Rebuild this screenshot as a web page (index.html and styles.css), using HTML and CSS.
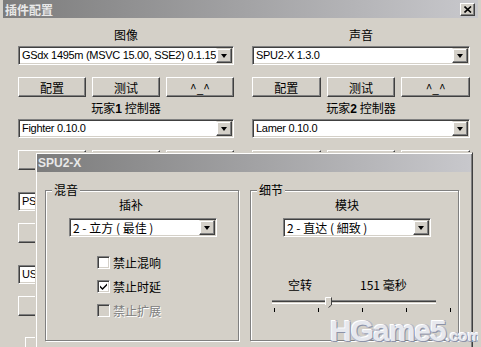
FILE: index.html
```html
<!DOCTYPE html>
<html lang="zh-CN">
<head>
    <meta charset="UTF-8">
    <meta name="viewport" content="width=device-width, initial-scale=1.0">
    <title>插件配置</title>
    <link rel="stylesheet" href="styles.css">
</head>
<body>
    <div class="window">
        <div class="titlebar">
            <span class="title">插件配置</span>
            <button class="close-btn" aria-label="关闭">
                <svg width="8" height="7" viewBox="0 0 8 7"><path d="M0.5 0.5 L7 6.5 M7 0.5 L0.5 6.5" stroke="#000" stroke-width="1.6" fill="none"/></svg>
            </button>
        </div>

        <!-- Plugin columns (behind the SPU2-X dialog) -->
        <div class="columns">
            <div class="column">
                <div class="section-label">图像</div>
                <div class="combo"><span class="combo-text">GSdx 1495m (MSVC 15.00, SSE2) 0.1.15</span><span class="combo-arrow"></span></div>
                <div class="btn-row"><button class="btn">配置</button><button class="btn">测试</button><button class="btn">^_^</button></div>

                <div class="section-label">玩家<b>1</b> 控制器</div>
                <div class="combo"><span class="combo-text">Fighter 0.10.0</span><span class="combo-arrow"></span></div>
                <div class="btn-row"><button class="btn"></button><button class="btn"></button><button class="btn"></button></div>

                <div class="section-label"></div>
                <div class="combo"><span class="combo-text">PS2</span><span class="combo-arrow"></span></div>
                <div class="btn-row"><button class="btn"></button><button class="btn"></button><button class="btn"></button></div>

                <div class="section-label"></div>
                <div class="combo"><span class="combo-text">USB</span><span class="combo-arrow"></span></div>
                <div class="btn-row"><button class="btn"></button><button class="btn"></button><button class="btn"></button></div>

                <div class="extra-row"><span class="btn small"></span></div>
            </div>

            <div class="column">
                <div class="section-label">声音</div>
                <div class="combo"><span class="combo-text">SPU2-X 1.3.0</span><span class="combo-arrow"></span></div>
                <div class="btn-row"><button class="btn">配置</button><button class="btn">测试</button><button class="btn">^_^</button></div>

                <div class="section-label">玩家<b>2</b> 控制器</div>
                <div class="combo"><span class="combo-text">Lamer 0.10.0</span><span class="combo-arrow"></span></div>
                <div class="btn-row"><button class="btn"></button><button class="btn"></button><button class="btn"></button></div>
            </div>
        </div>

        <!-- SPU2-X settings dialog -->
        <div class="dialog">
            <div class="titlebar dialog-title">
                <span class="title">SPU2-X</span>
            </div>
            <div class="dialog-body">
                <div class="group">
                    <span class="group-title">混音</span>
                    <div class="group-label mix-label">插补</div>
                    <div class="combo group-combo mix-combo"><span class="combo-text">2 - 立方 ( 最佳 )</span><span class="combo-arrow"></span></div>
                    <div class="checks">
                        <label class="check"><span class="box"></span>禁止混响</label>
                        <label class="check"><span class="box">
                            <svg width="9" height="9" viewBox="0 0 9 9"><path d="M1 3.5 L3.5 6 L8 1.5 L8 3.5 L3.5 8 L1 5.5 Z" fill="#000"/></svg>
                        </span>禁止时延</label>
                        <label class="check disabled"><span class="box"></span>禁止扩展</label>
                    </div>
                </div>

                <div class="group">
                    <span class="group-title">细节</span>
                    <div class="group-label module-label">模块</div>
                    <div class="combo group-combo module-combo"><span class="combo-text">2 - 直达 ( 細致 )</span><span class="combo-arrow"></span></div>
                    <div class="slider-labels">
                        <span>空转</span>
                        <span>151 毫秒</span>
                    </div>
                    <div class="slider">
                        <div class="track"></div>
                        <svg class="thumb" width="7" height="11" viewBox="0 0 7 11">
                            <path d="M0.5 0.5 H6.5 V8 L3.5 10.5 L0.5 8 Z" fill="#d4d0c8"/>
                            <path d="M0.5 8 V0.5 H6" stroke="#fff" fill="none"/>
                            <path d="M6.5 0.5 V8 L3.5 10.5" stroke="#404040" fill="none"/>
                        </svg>
                        <div class="ticks">
                            <i></i><i></i><i></i><i></i><i class="last"></i>
                        </div>
                    </div>
                </div>
            </div>
        </div>

        <div class="watermark">HGame5<small>.com</small></div>
    </div>
</body>
</html>
```

FILE: styles.css
```css
body {
    margin: 0;
    background-color: #d4d0c8;
    font-family: "Liberation Sans", "Noto Sans CJK SC", sans-serif;
    font-size: 12px;
    color: #000;
    overflow: hidden;
}
.window {
    position: relative;
    width: 481px;
    height: 347px;
    box-sizing: border-box;
    border-left: 3px solid #d4d0c8;
    border-right: 3px solid #d4d0c8;
    box-shadow: -2px 0 0 #fff, 1px 0 0 #404040;
    overflow: hidden;
}
.titlebar {
    height: 18px;
    display: flex;
    align-items: center;
    justify-content: space-between;
    padding: 0 3px 0 2px;
    background: linear-gradient(to right, #7c7c7c, #c8c8cc);
}
.title {
    color: #e8e8e8;
    font-weight: bold;
    font-size: 12px;
    font-family: "Noto Sans CJK SC", "Liberation Sans", sans-serif;
}
.close-btn {
    width: 15px;
    height: 13px;
    padding: 0;
    display: flex;
    align-items: center;
    justify-content: center;
    background: #d4d0c8;
    border: 1px solid;
    border-color: #fff #404040 #404040 #fff;
    box-shadow: inset -1px -1px #808080;
}

/* plugin columns */
.columns {
    display: grid;
    grid-template-columns: 216px 218px;
    gap: 18px;
    padding: 6px 0 0 15px;
}
.section-label {
    height: 22px;
    line-height: 22px;
    text-align: center;
    font-family: "Noto Sans CJK SC", sans-serif;
}
.section-label b {
    font-family: "Liberation Sans", sans-serif;
}
.combo {
    display: flex;
    align-items: center;
    height: 19px;
    box-sizing: border-box;
    background: #fff;
    border: 1px solid;
    border-color: #808080 #fff #fff #808080;
    box-shadow: inset 1px 1px #404040, inset -1px -1px #d4d0c8;
    padding: 1px;
}
.combo-text {
    flex: 1;
    padding-left: 2px;
    white-space: nowrap;
    overflow: hidden;
    line-height: 15px;
    font-size: 11px;
    letter-spacing: -0.3px;
}
.combo-arrow {
    flex: none;
    width: 16px;
    height: 15px;
    box-sizing: border-box;
    background: #d4d0c8;
    border: 1px solid;
    border-color: #d4d0c8 #404040 #404040 #fff;
    box-shadow: inset -1px -1px #808080, inset 1px 1px #fff;
    display: flex;
    align-items: center;
    justify-content: center;
}
.combo-arrow::after {
    content: "";
    border-left: 3.5px solid transparent;
    border-right: 3.5px solid transparent;
    border-top: 4px solid #000;
}
.btn-row {
    display: grid;
    grid-template-columns: repeat(3, 1fr);
    gap: 6px;
    margin-top: 12px;
}
.btn {
    display: block;
    height: 20px;
    box-sizing: border-box;
    padding: 0;
    font-family: "Noto Sans CJK SC", "Liberation Sans", sans-serif;
    font-size: 12px;
    color: #000;
    background: #d4d0c8;
    border: 1px solid;
    border-color: #fff #404040 #404040 #fff;
    box-shadow: inset -1px -1px #808080;
}
.extra-row {
    margin: 21px 0 0 7px;
}
.btn.small {
    width: 70px;
}

/* SPU2-X dialog */
.dialog {
    position: absolute;
    left: 32px;
    top: 152px;
    width: 438px;
    height: 210px;
    box-sizing: border-box;
    background: #d4d0c8;
    border: 1px solid;
    border-color: #d4d0c8 #404040 #404040 #d4d0c8;
    box-shadow: inset 1px 1px #fff, inset -1px -1px #808080;
    padding: 1px;
}
.dialog-title {
    padding-left: 1px;
}
.dialog-title .title {
    font-family: "Liberation Sans", sans-serif;
}
.dialog-body {
    display: grid;
    grid-template-columns: 194px 209px;
    align-items: start;
    gap: 11px;
    padding: 18px 0 0 8px;
}

/* etched group box, title sits on the top line */
.group {
    position: relative;
    height: 151px;
    box-sizing: border-box;
    padding-top: 6px;
    border: 1px solid #808080;
    box-shadow: 1px 1px 0 #fff, inset 1px 1px 0 #fff;
}
.group-title {
    position: absolute;
    left: 6px;
    top: -8px;
    padding: 0 2px;
    line-height: 14px;
    background: #d4d0c8;
    font-family: "Noto Sans CJK SC", sans-serif;
}
.group-label {
    line-height: 16px;
    font-family: "Noto Sans CJK SC", sans-serif;
}
.mix-label {
    padding-left: 73px;
}
.module-label {
    padding-left: 84px;
}
.group-combo {
    width: 148px;
    margin-top: 5px;
}
.mix-combo {
    margin-left: 23px;
}
.module-combo {
    margin-left: 32px;
}
.group-combo .combo-text {
    font-size: 12px;
    letter-spacing: 0;
    font-family: "Noto Sans CJK SC", sans-serif;
}
.checks {
    margin-top: 13px;
    padding-left: 51px;
}
.check {
    display: flex;
    align-items: center;
    height: 24px;
    font-family: "Noto Sans CJK SC", sans-serif;
}
.box {
    width: 13px;
    height: 13px;
    box-sizing: border-box;
    margin-right: 3px;
    background: #fff;
    border: 1px solid;
    border-color: #808080 #fff #fff #808080;
    box-shadow: inset 1px 1px #404040, inset -1px -1px #d4d0c8;
    display: flex;
    align-items: center;
    justify-content: center;
}
.check.disabled {
    color: #808080;
    text-shadow: 1px 1px 0 #fff;
}
.check.disabled .box {
    background: #d4d0c8;
}

/* slider */
.slider-labels {
    display: grid;
    grid-template-columns: 72px auto;
    margin-top: 40px;
    padding-left: 37px;
    line-height: 16px;
    font-family: "Noto Sans CJK SC", sans-serif;
}
.slider {
    position: relative;
    margin-left: 21px;
    width: 164px;
    padding-top: 7px;
}
.track {
    height: 4px;
    box-sizing: border-box;
    border-top: 1px solid #808080;
    border-bottom: 1px solid #fff;
    background: #404040;
    box-shadow: inset 0 -1px #d4d0c8;
}
.thumb {
    position: absolute;
    left: 53px;
    top: 4px;
}
.ticks {
    display: flex;
    gap: 43px;
    height: 4px;
    padding: 0 2px;
    margin-top: 4px;
}
.ticks i {
    display: block;
    flex: none;
    width: 1px;
    height: 4px;
    background: #000;
}
.ticks i.last {
    margin-left: auto;
}

.watermark {
    position: absolute;
    left: 327px;
    top: 314px;
    font-family: "Liberation Sans", sans-serif;
    font-weight: bold;
    font-size: 30px;
    letter-spacing: -1px;
    color: #e6e8ee;
    text-shadow: 1px 1px 0 #8c92a8, -1px -1px 0 #fff, 1px -1px 0 #b4b8c8, -1px 1px 0 #b4b8c8;
}
.watermark small {
    font-size: 15px;
    letter-spacing: 0;
}
```
